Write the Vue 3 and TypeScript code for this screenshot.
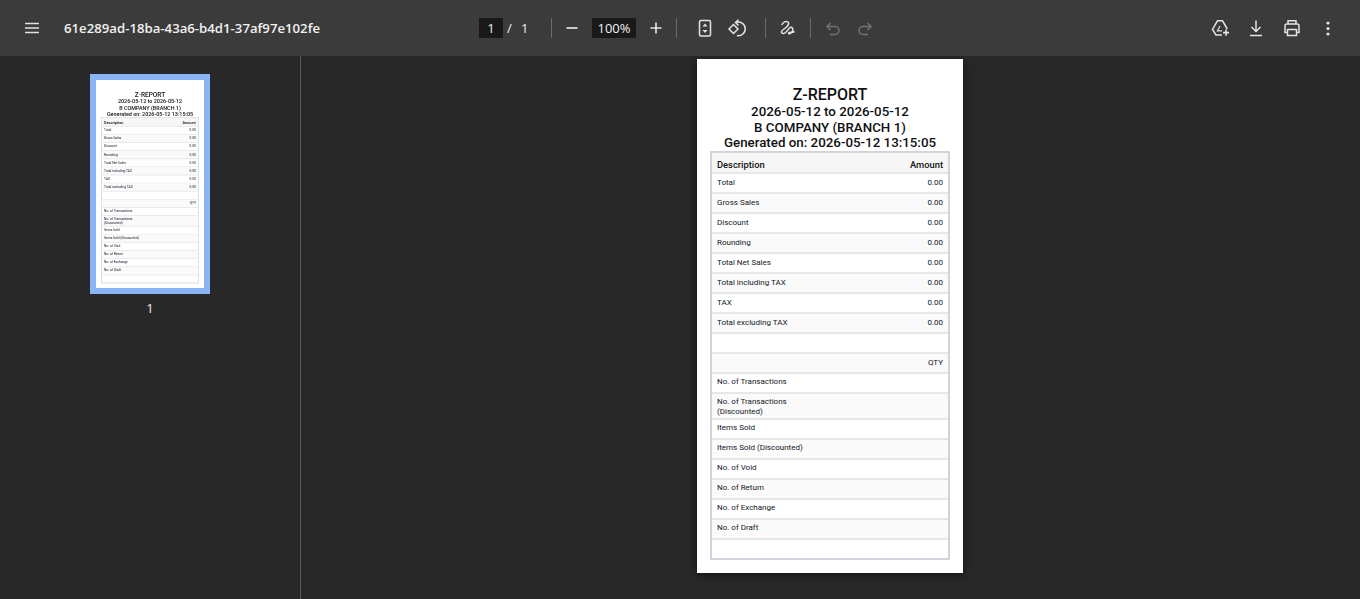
<script setup lang="ts">
interface ReportRow {
  label: string;
  value: string;
  tall?: boolean;
}

const rows: ReportRow[] = [
  { label: 'Total', value: '0.00' },
  { label: 'Gross Sales', value: '0.00' },
  { label: 'Discount', value: '0.00' },
  { label: 'Rounding', value: '0.00' },
  { label: 'Total Net Sales', value: '0.00' },
  { label: 'Total including TAX', value: '0.00' },
  { label: 'TAX', value: '0.00' },
  { label: 'Total excluding TAX', value: '0.00' },
  { label: '', value: '' },
  { label: '', value: 'QTY' },
  { label: 'No. of Transactions', value: '' },
  { label: 'No. of Transactions (Discounted)', value: '', tall: true },
  { label: 'Items Sold', value: '' },
  { label: 'Items Sold (Discounted)', value: '' },
  { label: 'No. of Void', value: '' },
  { label: 'No. of Return', value: '' },
  { label: 'No. of Exchange', value: '' },
  { label: 'No. of Draft', value: '' },
  { label: '', value: '' }
];
</script>

<template>
  <div class="viewer">
    <header class="toolbar">
      <div class="left">
        <button class="icon-btn">
          <svg viewBox="0 0 24 24"><path d="M5 7.500h14M5 12h14M5 16.500h14" class="line" /></svg>
        </button>
        <span class="file-name">61e289ad-18ba-43a6-b4d1-37af97e102fe</span>
      </div>

      <div class="center">
        <div class="pager">
          <span class="num-box page-box">1</span>
          <span class="slash">/</span>
          <span class="total">1</span>
        </div>
        <i class="sep sep-a"></i>
        <button class="icon-btn">
          <svg viewBox="0 0 24 24"><path d="M6.500 12h11" class="line thick" /></svg>
        </button>
        <span class="num-box zoom-box">100%</span>
        <button class="icon-btn">
          <svg viewBox="0 0 24 24"><path d="M6.500 12h11M12 6.500v11" class="line thick" /></svg>
        </button>
        <i class="sep sep-b"></i>
        <button class="icon-btn">
          <svg viewBox="0 0 24 24">
            <rect x="6.500" y="4.500" width="11" height="15.500" rx="1.500" class="line" />
            <path d="M12 7.500l2.500 3h-5zM9.500 14h5L12 17z" class="fill" />
          </svg>
        </button>
        <button class="icon-btn">
          <svg viewBox="0 0 24 24">
            <path d="M8.500 8.500L13 13l-4.500 4.500L4 13z" class="line" />
            <path d="M11 6.500A6.800 6.800 0 1 1 12 19.500M13.500 3.800L10.500 6.600l3 2.800" class="line" />
          </svg>
        </button>
        <i class="sep sep-c"></i>
        <button class="icon-btn">
          <svg viewBox="0 0 24 24">
            <path d="M6.700 9C8 6 11 4.500 13 6c2 2-1 5-4 7-3 2-3.500 4-1 4.500 3 .5 5-4.500 7-6 2-1 3.500 1 2.500 3.500-1 2.500-4 4-4 2 0-1.500 3.500 0 6-1.500" class="line" />
          </svg>
        </button>
        <i class="sep sep-d"></i>
        <button class="icon-btn off">
          <svg viewBox="0 0 24 24"><path d="M9.500 7L6 10.500 9.500 14M6.500 10.500H14a4 4 0 0 1 0 8H9" class="line" /></svg>
        </button>
        <button class="icon-btn off">
          <svg viewBox="0 0 24 24"><path d="M14.500 7L18 10.500 14.500 14M17.500 10.500H10a4 4 0 0 0 0 8h5" class="line" /></svg>
        </button>
      </div>

      <div class="right">
        <button class="icon-btn">
          <svg viewBox="0 0 24 24">
            <path d="M14 19H8l-3.500-5.500L9.500 4.800h5l4.800 8.200" class="line" />
            <path d="M12 10l-2.600 4.800h4.600" class="line thin" />
            <path d="M17.200 13.500h1.600v2.300H21v1.600h-2.200v2.300h-1.600v-2.300H15v-1.600h2.200z" class="fill" />
          </svg>
        </button>
        <button class="icon-btn">
          <svg viewBox="0 0 24 24"><path d="M12 4.500v11M7.500 11l4.500 4.500 4.500-4.500M6 19.500h12" class="line" /></svg>
        </button>
        <button class="icon-btn">
          <svg viewBox="0 0 24 24">
            <path d="M8 8V4.800h8V8M7.500 16.500H5V10a2 2 0 0 1 2-2h10a2 2 0 0 1 2 2v6.500h-2.500" class="line" />
            <path d="M7.500 13.500h9v6h-9z" class="line" />
          </svg>
        </button>
        <button class="icon-btn">
          <svg viewBox="0 0 24 24">
            <circle cx="12" cy="7" r="1.600" class="fill" />
            <circle cx="12" cy="12.500" r="1.600" class="fill" />
            <circle cx="12" cy="18" r="1.600" class="fill" />
          </svg>
        </button>
      </div>
    </header>

    <div class="body">
      <aside class="sidebar">
        <div class="thumb-frame">
          <div class="thumb-clip">
            <div class="sheet sheet-thumb">
              <div class="heading">
                <h1>Z-REPORT</h1>
                <p>2026-05-12 to 2026-05-12</p>
                <p>B COMPANY (BRANCH 1)</p>
                <p>Generated on: 2026-05-12 13:15:05</p>
              </div>
              <div class="report">
                <div class="row head"><span>Description</span><span>Amount</span></div>
                <div
                  v-for="(row, i) in rows"
                  :key="i"
                  class="row"
                  :class="{ tall: row.tall, odd: i % 2 === 1, low: i >= 10 }"
                >
                  <span class="label">{{ row.label }}</span><span>{{ row.value }}</span>
                </div>
              </div>
            </div>
          </div>
        </div>
        <span class="thumb-num">1</span>
      </aside>

      <main class="stage">
        <div class="sheet sheet-main">
          <div class="heading">
            <h1>Z-REPORT</h1>
            <p>2026-05-12 to 2026-05-12</p>
            <p>B COMPANY (BRANCH 1)</p>
            <p>Generated on: 2026-05-12 13:15:05</p>
          </div>
          <div class="report">
            <div class="row head"><span>Description</span><span>Amount</span></div>
            <div
              v-for="(row, i) in rows"
              :key="i"
              class="row"
              :class="{ tall: row.tall, odd: i % 2 === 1, low: i >= 10 }"
            >
              <span class="label">{{ row.label }}</span><span>{{ row.value }}</span>
            </div>
          </div>
        </div>
      </main>
    </div>
  </div>
</template>

<style scoped>
.viewer {
  width: 1360px;
  height: 599px;
  overflow: hidden;
  background: #282828;
  display: flex;
  flex-direction: column;
  font-family: "Open Sans", "Liberation Sans", sans-serif;
}

/* toolbar */
.toolbar {
  height: 56px;
  flex: none;
  display: flex;
  align-items: center;
  background: #3b3b3b;
  color: #fff;
}

.left {
  width: 479px;
  flex: none;
  display: flex;
  align-items: center;
  padding-left: 16px;
  box-sizing: border-box;
}

.file-name {
  margin-left: 16px;
  font-size: 13.200px;
  font-weight: 600;
  white-space: nowrap;
  color: #f1f1f1;
}

.center {
  display: flex;
  align-items: center;
}

.right {
  margin-left: auto;
  padding-right: 16px;
  display: flex;
  gap: 4px;
}

.icon-btn {
  width: 32px;
  height: 32px;
  flex: none;
  padding: 0;
  border: none;
  background: none;
  display: flex;
  align-items: center;
  justify-content: center;
  color: #e3e3e3;
}

.icon-btn svg {
  width: 24px;
  height: 24px;
}

.icon-btn.off {
  color: #727272;
}

.line {
  fill: none;
  stroke: currentColor;
  stroke-width: 1.500;
}

.line.thick {
  stroke-width: 1.700;
}

.line.thin {
  stroke-width: 1.200;
}

.fill {
  fill: currentColor;
}

.pager {
  width: 72px;
  display: flex;
  align-items: center;
  font-size: 13px;
  color: #f1f1f1;
}

.num-box {
  height: 20px;
  line-height: 20px;
  background: #191919;
  text-align: center;
  font-size: 13px;
  color: #f1f1f1;
}

.page-box {
  width: 24px;
}

.slash {
  margin-left: 4px;
  width: 8px;
}

.total {
  margin-left: 6px;
}

.zoom-box {
  width: 44px;
  margin: 0 4px;
}

.sep {
  width: 1px;
  height: 20px;
  flex: none;
  background: #6a6a6a;
}

.sep-a {
  margin-right: 4px;
}

.sep-b {
  margin: 0 12px 0 4px;
}

.sep-c {
  margin: 0 5px 0 12px;
}

.sep-d {
  margin: 0 6px 0 7px;
}

/* body */
.body {
  flex: 1;
  display: flex;
  min-height: 0;
}

.sidebar {
  width: 301px;
  flex: none;
  box-sizing: border-box;
  padding-top: 18px;
  border-right: 1px solid #5a5a5a;
  display: flex;
  flex-direction: column;
  align-items: center;
}

.thumb-frame {
  width: 120px;
  height: 220px;
  box-sizing: border-box;
  border: 6px solid #8ab4f8;
  background: #fff;
}

.thumb-clip {
  width: 108px;
  height: 208px;
  overflow: hidden;
  filter: blur(0.25px);
}

.thumb-num {
  margin-top: 6px;
  font-size: 13px;
  line-height: 16px;
  color: #f1f1f1;
}

.stage {
  flex: 1;
  display: flex;
  justify-content: center;
  padding-top: 3px;
  padding-right: 1px;
}

/* report page */
.sheet {
  width: 266px;
  height: 514px;
  flex: none;
  box-sizing: border-box;
  padding: 26px 13px 0;
  background: #fff;
  color: #111;
  font-family: Roboto, "Liberation Sans", sans-serif;
}

.sheet-main {
  box-shadow: 0 2px 8px rgba(0, 0, 0, 0.55);
}

.sheet-thumb {
  transform: scale(0.406);
  transform-origin: top left;
}

.heading {
  text-align: center;
  font-weight: 500;
}

.heading h1 {
  margin: 0;
  font-size: 16px;
  line-height: 19px;
  font-weight: 500;
}

.heading p {
  margin: 0;
  font-size: 13.330px;
  line-height: 15.700px;
}

.report {
  height: 409px;
  box-sizing: border-box;
  border: 2px solid #d1d5db;
  font-size: 8px;
  line-height: 10px;
}

.row {
  display: flex;
  justify-content: space-between;
  height: 20px;
  box-sizing: border-box;
  padding: 4px 5px 0;
  border-bottom: 2px solid #e5e7eb;
  color: #111827;
}

.row:last-child {
  border-bottom: none;
}

.row.odd {
  background: #fafafa;
}

.row.low {
  padding-top: 3px;
}

.row.tall {
  height: 26px;
}

.row.tall .label {
  max-width: 90px;
}

.row.head {
  height: 21px;
  padding-top: 7px;
  background: #f6f6f6;
  font-weight: 500;
  color: #111;
  font-size: 9.330px;
}
</style>

<style>
html,
body {
  margin: 0;
  background: #282828;
}
</style>
